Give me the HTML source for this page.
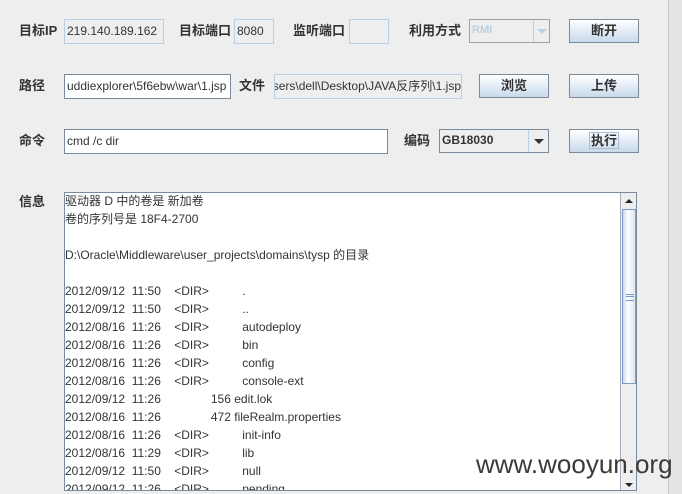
<!DOCTYPE html>
<html style="overflow:hidden"><head><meta charset="utf-8"><style>
html,body{overflow:hidden}
body{margin:0;width:682px;height:494px;background:#eeeeee;position:relative;font-family:"Liberation Sans","Noto Sans CJK SC",sans-serif;font-size:13px;color:#333}
.a{position:absolute}
.lbl{font-weight:bold;color:#333;font-size:13px;line-height:20px}
.f{position:absolute;box-sizing:border-box;border:1px solid #b8cfe5;background:#eeeeee;color:#333;font-size:12px;line-height:22px;padding-left:2px;white-space:nowrap;overflow:hidden}
.w{background:#fff;border:1px solid #7a8a99}
.btn{position:absolute;box-sizing:border-box;width:70px;height:24px;border:1px solid #7a8a99;background:linear-gradient(#ffffff,#dde8f3 60%,#c8d9ea);text-align:center;font-weight:bold;line-height:22px;color:#333}
.ln{position:absolute;left:65px;white-space:pre;font-size:12px;line-height:18px;color:#333}
</style></head><body>
<div class="a" style="left:668px;top:0;width:14px;height:494px;background:#e4e4e4;border-left:1px solid #c8c8c8"></div>

<div class="a lbl" style="left:19px;top:21px">目标IP</div>
<div class="f" style="left:64px;top:19px;width:100px;height:25px">219.140.189.162</div>
<div class="a lbl" style="left:179px;top:21px">目标端口</div>
<div class="f" style="left:234px;top:19px;width:40px;height:25px">8080</div>
<div class="a lbl" style="left:293px;top:21px">监听端口</div>
<div class="f" style="left:349px;top:19px;width:40px;height:25px"></div>
<div class="a lbl" style="left:409px;top:21px">利用方式</div>
<div class="f" style="left:469px;top:19px;width:81px;height:24px;border-color:#a0a0a0;color:#b8cfe5;font-size:11px;font-weight:bold;line-height:20px"><div style="position:absolute;left:0;top:0;width:61px;height:22px;border-right:1px solid #b8cfe5;padding-left:2px">RMI</div><div style="position:absolute;left:67px;top:9px;width:0;height:0;border-left:5px solid transparent;border-right:5px solid transparent;border-top:5px solid #b8cfe5"></div></div>
<div class="btn" style="left:569px;top:19px">断开</div>

<div class="a lbl" style="left:19px;top:76px">路径</div>
<div class="f w" style="left:64px;top:74px;width:167px;height:25px">uddiexplorer\5f6ebw\war\1.jsp</div>
<div class="a lbl" style="left:239px;top:76px">文件</div>
<div class="f" style="left:274px;top:74px;width:188px;height:25px;direction:rtl;text-align:left"><span style="direction:ltr;unicode-bidi:embed">C:\Users\dell\Desktop\JAVA反序列\1.jsp</span></div>
<div class="btn" style="left:479px;top:74px">浏览</div>
<div class="btn" style="left:569px;top:74px">上传</div>

<div class="a lbl" style="left:19px;top:131px">命令</div>
<div class="f w" style="left:64px;top:129px;width:324px;height:25px">cmd /c dir</div>
<div class="a lbl" style="left:404px;top:131px">编码</div>
<div class="f" style="left:439px;top:129px;width:110px;height:24px;border-color:#7a8a99;font-weight:bold;font-size:12px;line-height:20px"><div style="position:absolute;left:0;top:0;width:86px;height:22px;border-right:1px solid #b8cfe5;padding-left:2px">GB18030</div><div style="position:absolute;left:94px;top:9px;width:0;height:0;border-left:5px solid transparent;border-right:5px solid transparent;border-top:5px solid #333"></div></div>
<div class="btn" style="left:569px;top:129px"><span style="border:1px solid #a8bcd0;padding:0 1px">执行</span></div>

<div class="a lbl" style="left:19px;top:192px">信息</div>
<div class="a" style="left:64px;top:192px;width:573px;height:299px;box-sizing:border-box;border:1px solid #7a8a99;background:#fff;overflow:hidden">
 <div class="a" style="right:0;top:0;width:15px;height:299px;background:#eeeeee;border-left:1px solid #aab"></div>
 <div class="a" style="right:3px;top:6px;width:0;height:0;border-left:4px solid transparent;border-right:4px solid transparent;border-bottom:4px solid #222"></div>
 <div class="a" style="right:0;top:16px;width:14px;height:175px;box-sizing:border-box;border:1px solid #7a9ac8;background:linear-gradient(90deg,#c8d9ea,#fff 40%,#dbe6f2)"><div style="position:absolute;left:3px;top:84px;width:8px;height:5px;border-top:1px solid #7a9ac8;border-bottom:1px solid #7a9ac8"></div><div style="position:absolute;left:3px;top:86px;width:8px;border-top:1px solid #7a9ac8"></div></div>
 <div class="a" style="right:3px;top:290px;width:0;height:0;border-left:4px solid transparent;border-right:4px solid transparent;border-top:4px solid #222"></div>
</div>
<div class="ln" style="top:192px">驱动器 D 中的卷是 新加卷</div>
<div class="ln" style="top:210px">卷的序列号是 18F4-2700</div>
<div class="ln" style="top:246px">D:\Oracle\Middleware\user_projects\domains\tysp 的目录</div>
<div class="ln" style="top:282px">2012/09/12  11:50    &lt;DIR&gt;          .</div>
<div class="ln" style="top:300px">2012/09/12  11:50    &lt;DIR&gt;          ..</div>
<div class="ln" style="top:318px">2012/08/16  11:26    &lt;DIR&gt;          autodeploy</div>
<div class="ln" style="top:336px">2012/08/16  11:26    &lt;DIR&gt;          bin</div>
<div class="ln" style="top:354px">2012/08/16  11:26    &lt;DIR&gt;          config</div>
<div class="ln" style="top:372px">2012/08/16  11:26    &lt;DIR&gt;          console-ext</div>
<div class="ln" style="top:390px">2012/09/12  11:26               156 edit.lok</div>
<div class="ln" style="top:408px">2012/08/16  11:26               472 fileRealm.properties</div>
<div class="ln" style="top:426px">2012/08/16  11:26    &lt;DIR&gt;          init-info</div>
<div class="ln" style="top:444px">2012/08/16  11:29    &lt;DIR&gt;          lib</div>
<div class="ln" style="top:462px">2012/09/12  11:50    &lt;DIR&gt;          null</div>
<div class="a" style="left:65px;top:480px;width:555px;height:10px;overflow:hidden"><div class="ln" style="left:0;top:0">2012/09/12  11:26    &lt;DIR&gt;          pending</div></div>
<div class="a" style="left:476px;top:449px;font-size:26px;color:#3a3a3a;line-height:30px">www.wooyun.org</div>
</body></html>
